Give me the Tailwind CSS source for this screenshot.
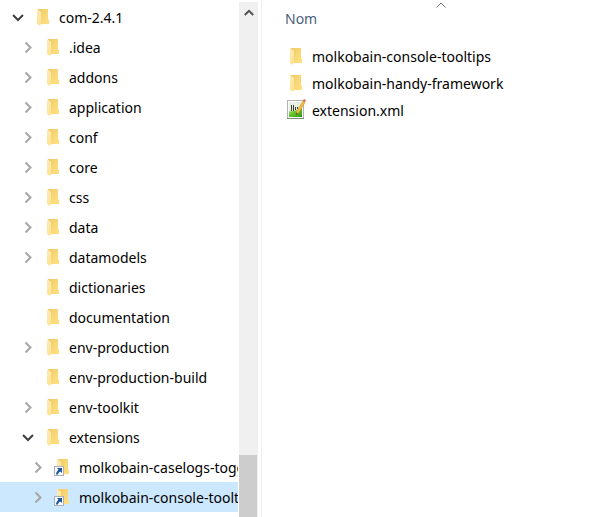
<!DOCTYPE html>
<html lang="fr">
<head>
<meta charset="utf-8">
<title>extensions</title>
<script src="https://cdn.jsdelivr.net/npm/@tailwindcss/browser@4"></script>
</head>
<body class="flex h-screen overflow-hidden bg-white font-['Noto_Sans','Open_Sans',sans-serif] text-[14px] text-black">

<svg class="absolute h-0 w-0" aria-hidden="true">
  <defs>
    <linearGradient id="back" x1="0" y1="0" x2="1" y2="1"><stop offset="0" stop-color="#efc866"/><stop offset=".5" stop-color="#f8d775"/><stop offset="1" stop-color="#ffdf83"/></linearGradient>
    <linearGradient id="flap" x1="0" y1="0" x2="0" y2="1"><stop offset="0" stop-color="#ffebb4"/><stop offset="1" stop-color="#ffe294"/></linearGradient>
    <linearGradient id="green" x1="0" y1="0" x2="1" y2="1"><stop offset="0" stop-color="#b5e88a"/><stop offset=".5" stop-color="#5cc126"/><stop offset="1" stop-color="#2e9a12"/></linearGradient>
    <symbol id="folder" viewBox="0 0 12 18">
      <path d="M1 1H11V11L12 12V16H1Z" fill="url(#back)"/>
      <path d="M0 1L4 4V16L3 18L0 16Z" fill="url(#flap)"/>
    </symbol>
    <symbol id="shortcut" viewBox="0 0 16 18">
      <path d="M4 1H14V11L15 12V16H4Z" fill="url(#back)"/>
      <path d="M3 1L7 4V16H3Z" fill="url(#flap)"/>
      <rect x=".5" y="8.500" width="9" height="9" fill="#f8fbff" stroke="#a9b0b8"/>
      <path d="M3 10H8V15L6.400 13.400C5 14 4.200 15 4 16.500H2C2 14.500 3 13 4.600 11.700Z" fill="#1d5596"/>
    </symbol>
    <symbol id="right" viewBox="0 0 12 12"><path d="M3.500 1.500L8.500 6.500L3.500 11.500" fill="none" stroke="#a6a6a6" stroke-width="2"/></symbol>
    <symbol id="down" viewBox="0 0 12 12"><path d="M1 4L6 9L11 4" fill="none" stroke="#404040" stroke-width="2"/></symbol>
  </defs>
</svg>

<aside class="flex w-[262px] shrink-0 border-r border-[#f0f0f0] pr-[3px] pt-[2px]">
  <nav class="min-w-0 flex-1 overflow-hidden" aria-label="Dossiers">
    <ul id="tree"></ul>
  </nav>
  <div class="flex w-[19px] shrink-0 flex-col bg-[#f0f0f0]">
    <button class="flex h-[21px] items-center justify-center" aria-label="Défiler vers le haut">
      <svg class="h-[10px] w-[10px]" viewBox="0 0 10 10"><path d="M.8 7L5 2.800L9.200 7" fill="none" stroke="#505050" stroke-width="2"/></svg>
    </button>
    <div class="flex-1"></div>
    <div class="mr-px h-[62px] bg-[#cdcdcd]"></div>
  </div>
</aside>

<main class="min-w-0 flex-1 pl-[22px]">
  <table class="w-full border-collapse text-left">
    <thead>
      <tr><th class="p-0 font-normal">
        <button class="relative block h-[43px] w-full pb-[6px] pl-px text-left text-[#4c607a]">Nom
          <svg class="absolute left-1/2 top-[2px] -ml-[8px] h-[6px] w-[10px]" viewBox="0 0 10 6"><path d="M.5 5.500L5 1L9.500 5.500" fill="none" stroke="#767676"/></svg>
        </button>
      </th></tr>
    </thead>
    <tbody>
      <tr><td class="p-0"><a href="#" class="flex h-[27px] items-center"><span class="flex w-[28px] pl-[6px]"><svg class="mb-px h-[18px] w-[12px]"><use href="#folder"/></svg></span>molkobain-console-tooltips</a></td></tr>
      <tr><td class="p-0"><a href="#" class="flex h-[27px] items-center"><span class="flex w-[28px] pl-[6px]"><svg class="mb-px h-[18px] w-[12px]"><use href="#folder"/></svg></span>molkobain-handy-framework</a></td></tr>
      <tr><td class="p-0"><a href="#" class="flex h-[27px] items-center"><span class="flex w-[28px] pl-[2px]">
        <svg class="mb-[3px] h-[20px] w-[20px]" viewBox="0 0 20 20">
          <rect x="1.500" y="1.500" width="16" height="18" fill="#fff" stroke="#b4b4b4"/>
          <rect x="3" y="3" width="13" height="9" fill="#e7eee4"/>
          <path d="M3 12Q9 13 16 9V18H3Z" fill="url(#green)"/>
          <path d="M5 6H6V12H5ZM7 6H8V12H7ZM9 8H10V11H9ZM11 8H12V10H11Z" fill="#34442f"/>
          <path d="M1 19.500H18" stroke="#7f8a7b"/>
          <path d="M17 2L19 3.500L12.500 14L10 16L10.500 12.500Z" fill="#f6bd3e" stroke="#c88a22" stroke-width=".5"/>
          <path d="M17 1.500L18 0L20 1.300L19 3.200Z" fill="#e0645a"/>
          <path d="M10.400 13.500L12 14.500L10 16Z" fill="#5a4326"/>
        </svg></span>extension.xml</a></td></tr>
    </tbody>
  </table>
</main>

<script>
  // [indent level, name, state]: "down" is open, "right" is closed, "" has no children
  const nodes = [
    [0, "com-2.4.1", "down"], [1, ".idea", "right"], [1, "addons", "right"],
    [1, "application", "right"], [1, "conf", "right"], [1, "core", "right"],
    [1, "css", "right"], [1, "data", "right"], [1, "datamodels", "right"],
    [1, "dictionaries", ""], [1, "documentation", ""], [1, "env-production", "right"],
    [1, "env-production-build", ""], [1, "env-toolkit", "right"], [1, "extensions", "down"],
    [2, "molkobain-caselogs-toggle", "right"], [2, "molkobain-console-tooltips", "right"]
  ];
  const indents = ["pl-[12px]", "pl-[22px]", "pl-[32px]"];
  document.getElementById("tree").innerHTML = nodes.map(([level, name, state], i) => {
    const toggle = state
      ? `<button class="w-[12px] shrink-0" aria-label="${name}"><svg class="h-[12px] w-[12px]"><use href="#${state}"/></svg></button>`
      : `<span class="w-[12px] shrink-0"></span>`;
    const icon = level === 2
      ? `<svg class="ml-[10px] mr-[9px] h-[18px] w-[16px] shrink-0"><use href="#shortcut"/></svg>`
      : `<svg class="ml-[13px] mr-[10px] h-[18px] w-[12px] shrink-0"><use href="#folder"/></svg>`;
    const fill = i === nodes.length - 1 ? "bg-[#cce8ff]" : "";
    return `<li class="mr-px flex h-[30px] items-center overflow-hidden whitespace-nowrap ${indents[level]} ${fill}">${toggle}${icon}<a href="#">${name}</a></li>`;
  }).join("");
</script>
</body>
</html>
